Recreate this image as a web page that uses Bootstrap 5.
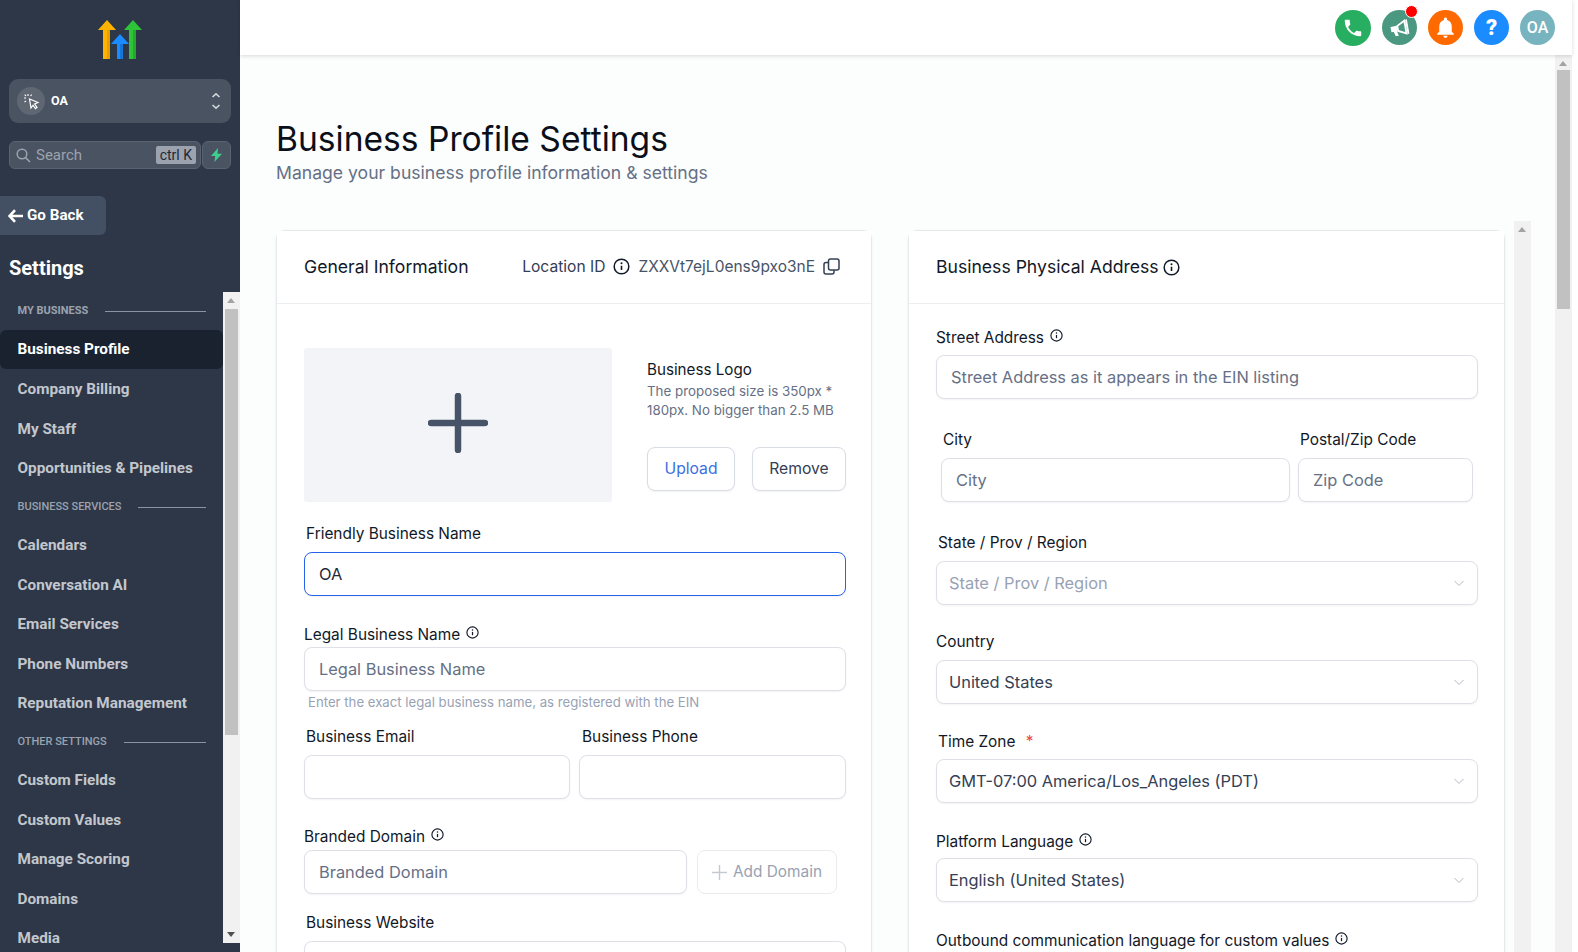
<!DOCTYPE html>
<html lang="en">
<head>
    <meta charset="UTF-8">
    <meta name="viewport" content="width=device-width, initial-scale=1.0">
    <title>Business Profile Settings</title>
    <link href="https://cdn.jsdelivr.net/npm/bootstrap@5.3.3/dist/css/bootstrap.min.css" rel="stylesheet">
    <script src="https://cdn.jsdelivr.net/npm/bootstrap@5.3.3/dist/js/bootstrap.bundle.min.js"></script>
    <style>
        html, body {
            height: 100%;
            overflow: hidden;
        }
        body {
            background: #fff;
            font-family: "Inter", "Liberation Sans", sans-serif;
            color: #111827;
        }
        /* sidebar */
        .side {
            width: 240px;
            height: 952px;
            background: #2d3748;
            font-family: "Roboto", "Liberation Sans", sans-serif;
        }
        .side-logo {
            height: 79px;
            padding-top: 20px;
            padding-left: 2px;
        }
        .switcher {
            margin: 0 9px;
            height: 44px;
            background: #4a5361;
            border-radius: 9px;
            padding: 0 10px 0 8px;
            color: #fff;
            font-size: 12.5px;
            font-weight: 700;
        }
        .switch-pic {
            width: 28px;
            height: 28px;
            border-radius: 50%;
            background: #5f6773;
            margin-right: 6px;
        }
        .search-row {
            margin: 18px 9px 0;
            height: 28px;
            gap: 1px;
        }
        .search-box {
            width: 192px;
            background: #4a5361;
            border: 1px solid #5a6372;
            border-radius: 6px;
            padding: 0 4px 0 6px;
            color: #9ca3af;
            font-size: 15px;
        }
        .search-box svg {
            margin-right: 5px;
        }
        .kbd-chip {
            margin-left: auto;
            background: #9ca3af;
            color: #1f2937;
            font-size: 14px;
            line-height: 18px;
            padding: 0 4px;
            border-radius: 2px;
        }
        .bolt-box {
            width: 29px;
            background: #4a5361;
            border: 1px solid #5a6372;
            border-radius: 6px;
        }
        .back-btn {
            margin-top: 27px;
            width: 106px;
            height: 39px;
            background: #434f63;
            border-radius: 0 6px 6px 0;
            color: #fff;
            font-size: 15.2px;
            font-weight: 700;
            padding-left: 8px;
            gap: 4px;
        }
        .side-title {
            margin: 21px 0 12px 9px;
            font-size: 20px;
            line-height: 24px;
            font-weight: 700;
            color: #fff;
        }
        .side-panel {
            height: 651px;
        }
        .side-list {
            width: 223px;
            overflow: hidden;
        }
        .side-label {
            height: 36px;
            padding: 0 17px 0 17.5px;
            color: #9ca3af;
            font-size: 11px;
            font-weight: 500;
            gap: 17px;
        }
        .side-label.first {
            height: 38px;
            font-weight: 700;
        }
        .side-label::after {
            content: "";
            flex: 1;
            height: 1px;
            background: #8b93a1;
        }
        .side-link {
            height: 38.4px;
            margin-bottom: 1.2px;
            padding: 0 0 0 17.5px;
            display: flex;
            align-items: center;
            color: #c3c7cd;
            font-size: 15.3px;
            font-weight: 700;
        }
        .side-link.active {
            height: 39.4px;
            background: #1a2230;
            border-radius: 6px;
            color: #fff;
        }
        .link-gap {
            margin-top: 1px;
        }
        .bar-track {
            width: 17px;
            background: #f1f1f1;
            position: relative;
            flex-shrink: 0;
        }
        .bar-thumb {
            position: absolute;
            left: 2px;
            right: 2px;
            background: #c1c1c1;
        }
        .bar-up, .bar-down {
            position: absolute;
            left: 4px;
            width: 0;
            height: 0;
            border-left: 4.5px solid transparent;
            border-right: 4.5px solid transparent;
        }
        .bar-up {
            top: 6px;
            border-bottom: 5px solid #a3a3a3;
        }
        .bar-down {
            bottom: 6px;
            border-top: 5px solid #505050;
        }
        /* top bar */
        .main-area {
            width: 1332px;
            height: 952px;
        }
        .top-bar {
            height: 55px;
            background: #fff;
            box-shadow: 0 1px 4px rgba(0, 0, 0, .15);
            padding-right: 17px;
            gap: 11px;
            position: relative;
            z-index: 2;
        }
        .round-btn {
            width: 35px;
            height: 35px;
            border-radius: 50%;
            color: #fff;
            position: relative;
            font-family: "Roboto", "Liberation Sans", sans-serif;
            font-weight: 700;
        }
        .round-phone {
            width: 36px;
            height: 36px;
            background: #27ae60;
        }
        .round-mega { background: #4a9880; }
        .round-bell { background: #ff6a00; }
        .round-help { background: #1a8cff; font-size: 22px; font-weight: 900; }
        .round-user { background: #78b3c0; font-size: 16px; font-weight: 500; }
        .red-dot {
            position: absolute;
            top: -5px;
            right: -1px;
            width: 13px;
            height: 13px;
            border-radius: 50%;
            background: #f00;
            border: 1px solid #fff;
        }
        .mega-tilt {
            transform: rotate(-10deg);
        }
        .page-wrap {
            height: 897px;
            background: #fcfdfd;
            overflow: hidden;
        }
        .page-content {
            width: 1315px;
            padding-left: 36px;
        }
        .page-title {
            margin: 64px 0 0;
            font-size: 33.6px;
            line-height: 40px;
            font-weight: 400;
            color: #0b0f19;
        }
        .page-sub {
            margin: 1px 0 44px;
            font-size: 17.6px;
            line-height: 26px;
            color: #667085;
        }
        .cols {
            gap: 36px;
        }
        .panel-one { width: 596px; }
        .panel-two { width: 597px; }
        .info-card {
            border: 1px solid #e6e8ec;
            border-radius: 9px;
            box-shadow: 0 1px 3px rgba(16, 24, 40, .06);
            background: #fff;
        }
        .info-head {
            height: 73px;
            padding: 0 31px 0 27px;
            border-bottom: 1px solid #eceef2;
            background: #fff;
            font-size: 17.6px;
            color: #111827;
        }
        .loc-id {
            margin-left: auto;
            font-size: 15.6px;
            color: #344054;
        }
        .loc-val {
            color: #475467;
            font-size: 15.5px;
        }
        .info-body {
            padding: 44px 25px 0 27px;
        }
        .info-body.two {
            padding: 24px 26px 0 27px;
        }
        .logo-box {
            width: 308px;
            height: 154px;
            background: #f3f4f7;
            border-radius: 3px;
        }
        .logo-plus {
            margin-bottom: 4px;
        }
        .logo-side {
            padding-left: 35px;
            font-size: 15.2px;
            line-height: 19px;
            padding-top: 12px;
        }
        .logo-hint {
            font-size: 13.35px;
            line-height: 19px;
            color: #667085;
            margin-top: 3px;
        }
        .logo-btns {
            gap: 17px;
            margin-top: 27px;
        }
        .plain-btn {
            height: 44px;
            border: 1px solid #d8dce3;
            border-radius: 8px;
            background: #fff;
            font-size: 15.7px;
            color: #344054;
            padding: 0;
            box-shadow: 0 1px 2px rgba(16, 24, 40, .05);
        }
        .btn-upload { width: 88px; color: #3b6fe0; }
        .btn-remove { width: 94px; }
        .btn-domain {
            width: 140px;
            height: 44px;
            margin-left: 10px;
            color: #98a2b3;
            border-color: #eaecf0;
            font-size: 15.4px;
            gap: 6px;
            box-shadow: none;
        }
        .fld-label {
            display: block;
            font-size: 15.4px;
            line-height: 20px;
            margin: 0 0 8px;
            color: #111827;
        }
        .fld-input.form-control, .fld-input.form-select {
            height: 44px;
            border: 1px solid #dde0e6;
            border-radius: 8px;
            padding: 0 14px;
            font-size: 16.4px;
            color: #344054;
            box-shadow: 0 1px 2px rgba(16, 24, 40, .05);
        }
        .fld-input.form-select {
            padding-left: 12px;
            background-image: url("data:image/svg+xml,%3csvg xmlns='http://www.w3.org/2000/svg' viewBox='0 0 12 12'%3e%3cpath fill='none' stroke='%23b4bac4' stroke-width='1' d='M1.5 4l4.5 4.5L10.5 4'/%3e%3c/svg%3e");
            background-size: 12px 12px;
            background-position: right 12px center;
        }
        .fld-input.is-blue {
            border-color: #2563eb;
            color: #1f2937;
        }
        .fld-input::placeholder {
            color: #667085;
            opacity: 1;
        }
        .fld-input.dim-select {
            color: #98a2b3;
        }
        .fld-hint {
            font-size: 13.2px;
            line-height: 18px;
            color: #98a2b3;
            margin: 2px 0 0 4px;
        }
        .tip-icon {
            margin-left: 6px;
            vertical-align: 1px;
        }
        .star-red {
            color: #f04438;
            margin-left: 6px;
        }
        .in-a { padding-left: 2px; }
        .in-c { padding-left: 3px; }
        .gap-tight { margin-bottom: 2px; }
    </style>
</head>
<body>
<svg width="0" height="0" class="position-absolute">
    <symbol id="tip" viewBox="0 0 16 16">
        <circle cx="8" cy="8" r="6.9" fill="none" stroke="currentColor" stroke-width="1.4"/>
        <path d="M8 7.3v4" stroke="currentColor" stroke-width="1.5" fill="none"/>
        <circle cx="8" cy="5" r=".95" fill="currentColor"/>
    </symbol>
</svg>
<div class="d-flex">
    <aside class="side flex-shrink-0">
        <div class="side-logo d-flex justify-content-center">
            <svg width="46" height="40" viewBox="0 0 46 40">
                <path d="M0 10 9 0l9 10h-6v29H5V10z" fill="#ffb300"/>
                <path d="M9 10h3v29H9z" fill="#e69f00"/>
                <path d="M26 10 35 0l9 10h-6v29h-7V10z" fill="#2dc437"/>
                <path d="M35 10h3v29h-3z" fill="#25a82e"/>
                <path d="M13 24l9-10 9 10h-6v15h-6V24z" fill="#1a8cff"/>
                <path d="M22 24h3v15h-3z" fill="#1676d8"/>
            </svg>
        </div>
        <div class="switcher d-flex align-items-center">
            <span class="switch-pic d-flex align-items-center justify-content-center">
                <svg width="17" height="17" viewBox="0 0 17 17" fill="none" stroke="#fff" stroke-width="1.2">
                    <path d="M6.5 6 15 9.5 11.6 11 14 14.3 12.4 15.6 10 12.2 8 15z"/>
                    <path d="M1 5h2M5 1v2M1.5 9 3 8M8.6 1.6 7.6 3M1.7 1.7l1.3 1.3" stroke-width="1.1"/>
                </svg>
            </span>
            <span>OA</span>
            <svg class="ms-auto" width="10" height="20" viewBox="0 0 10 20" fill="none" stroke="#d1d5db" stroke-width="1.6">
                <path d="M1.5 6 5 2.8 8.5 6M1.5 14 5 17.2 8.5 14"/>
            </svg>
        </div>
        <div class="search-row d-flex">
            <div class="search-box d-flex align-items-center">
                <svg width="15" height="15" viewBox="0 0 15 15" fill="none" stroke="#9ca3af" stroke-width="1.5">
                    <circle cx="6" cy="6" r="4.8"/>
                    <path d="M9.6 9.6 14 14"/>
                </svg>
                <span>Search</span>
                <span class="kbd-chip">ctrl K</span>
            </div>
            <div class="bolt-box d-flex align-items-center justify-content-center">
                <svg width="13" height="14" viewBox="0 0 13 14">
                    <path d="M8 0 1 8h4.3L4.4 14 12 5.7H7.5z" fill="#3ecf8e"/>
                </svg>
            </div>
        </div>
        <div class="back-btn d-flex align-items-center">
            <svg width="15" height="14" viewBox="0 0 15 14" fill="none" stroke="#fff" stroke-width="2.6">
                <path d="M7 1.2 1.6 7 7 12.8M2 7h13"/>
            </svg>
            <span>Go Back</span>
        </div>
        <div class="side-title">Settings</div>
        <div class="side-panel d-flex">
            <nav class="side-list">
                <div class="side-label first d-flex align-items-center">MY BUSINESS</div>
                <a class="side-link active text-decoration-none" href="#">Business Profile</a>
                <a class="side-link text-decoration-none" href="#">Company Billing</a>
                <a class="side-link text-decoration-none" href="#">My Staff</a>
                <a class="side-link text-decoration-none" href="#">Opportunities &amp; Pipelines</a>
                <div class="side-label d-flex align-items-center">BUSINESS SERVICES</div>
                <a class="side-link link-gap text-decoration-none" href="#">Calendars</a>
                <a class="side-link text-decoration-none" href="#">Conversation AI</a>
                <a class="side-link text-decoration-none" href="#">Email Services</a>
                <a class="side-link text-decoration-none" href="#">Phone Numbers</a>
                <a class="side-link text-decoration-none" href="#">Reputation Management</a>
                <div class="side-label d-flex align-items-center">OTHER SETTINGS</div>
                <a class="side-link link-gap text-decoration-none" href="#">Custom Fields</a>
                <a class="side-link text-decoration-none" href="#">Custom Values</a>
                <a class="side-link text-decoration-none" href="#">Manage Scoring</a>
                <a class="side-link text-decoration-none" href="#">Domains</a>
                <a class="side-link text-decoration-none" href="#">Media</a>
            </nav>
            <div class="bar-track">
                <span class="bar-up"></span>
                <span class="bar-thumb" style="top: 17px; height: 426px;"></span>
                <span class="bar-down"></span>
            </div>
        </div>
    </aside>
    <div class="main-area flex-shrink-0">
        <header class="top-bar d-flex align-items-center justify-content-end">
            <span class="round-btn round-phone d-flex align-items-center justify-content-center">
                <svg width="22" height="22" viewBox="0 0 24 24"><path fill="#fff" d="M6.62 10.79c1.44 2.83 3.76 5.14 6.59 6.59l2.2-2.2c.27-.27.67-.36 1.02-.24 1.12.37 2.33.57 3.57.57.55 0 1 .45 1 1V20c0 .55-.45 1-1 1-9.39 0-17-7.61-17-17 0-.55.45-1 1-1h3.5c.55 0 1 .45 1 1 0 1.25.2 2.45.57 3.57.11.35.03.74-.25 1.02l-2.2 2.2z"/></svg>
            </span>
            <span class="round-btn round-mega d-flex align-items-center justify-content-center">
                <svg class="mega-tilt" width="22" height="22" viewBox="0 0 24 24">
                    <path fill="#fff" d="M2 9h7v6H2zM4.5 15h3.6l1.2 5H6z"/>
                    <path fill="none" stroke="#fff" stroke-width="2" d="M9.5 9.2 18 5v14l-8.5-4.2z"/>
                    <path fill="#fff" d="M19 4h2v16h-2z"/>
                </svg>
                <span class="red-dot"></span>
            </span>
            <span class="round-btn round-bell d-flex align-items-center justify-content-center">
                <svg width="25" height="25" viewBox="0 0 24 24"><path fill="#fff" d="M12 22c1.1 0 2-.9 2-2h-4c0 1.1.89 2 2 2zm6-6v-5c0-3.07-1.64-5.64-4.5-6.32V4c0-.83-.67-1.5-1.5-1.5s-1.5.67-1.5 1.5v.68C7.63 5.36 6 7.92 6 11v5l-2 2v1h16v-1l-2-2z"/></svg>
            </span>
            <span class="round-btn round-help d-flex align-items-center justify-content-center">?</span>
            <span class="round-btn round-user d-flex align-items-center justify-content-center">OA</span>
        </header>
        <div class="page-wrap d-flex">
            <div class="page-content d-flex">
                <div>
                <h1 class="page-title">Business Profile Settings</h1>
                <p class="page-sub">Manage your business profile information &amp; settings</p>
                <div class="cols d-flex align-items-start">
                    <div class="panel-one info-card card">
                        <div class="info-head d-flex align-items-center">
                            <span>General Information</span>
                            <span class="loc-id d-flex align-items-center">
                                Location ID
                                <svg class="mx-2" width="17" height="17" color="#111827"><use href="#tip"/></svg>
                                <span class="loc-val">ZXXVt7ejL0ens9pxo3nE</span>
                                <svg class="ms-2" width="17" height="17" viewBox="0 0 17 17" fill="none" stroke="#344054" stroke-width="1.5">
                                    <rect x="5.5" y="1" width="10.5" height="11" rx="2"/>
                                    <path d="M5.5 4.5H3A2 2 0 0 0 1 6.5V14a2 2 0 0 0 2 2h6a2 2 0 0 0 2-2v-2"/>
                                </svg>
                            </span>
                        </div>
                        <div class="info-body">
                            <div class="d-flex">
                                <div class="logo-box d-flex align-items-center justify-content-center flex-shrink-0">
                                    <svg class="logo-plus" width="60" height="60" viewBox="0 0 60 60" stroke="#475467" stroke-width="6.5" stroke-linecap="round">
                                        <path d="M30 3v54M3 30h54"/>
                                    </svg>
                                </div>
                                <div class="logo-side">
                                    <div>Business Logo</div>
                                    <div class="logo-hint">The proposed size is 350px *<br>180px. No bigger than 2.5 MB</div>
                                    <div class="logo-btns d-flex">
                                        <button class="plain-btn btn-upload btn" type="button">Upload</button>
                                        <button class="plain-btn btn-remove btn" type="button">Remove</button>
                                    </div>
                                </div>
                            </div>
                            <label class="fld-label in-a" style="margin-top: 22px;">Friendly Business Name</label>
                            <input class="fld-input is-blue form-control" type="text" value="OA">
                            <label class="fld-label gap-tight" style="margin-top: 29px;">Legal Business Name<svg class="tip-icon" width="13" height="13"><use href="#tip"/></svg></label>
                            <input class="fld-input form-control" type="text" placeholder="Legal Business Name">
                            <div class="fld-hint">Enter the exact legal business name, as registered with the EIN</div>
                            <div class="d-flex" style="margin-top: 16px;">
                                <div style="width: 266px;">
                                    <label class="fld-label in-a">Business Email</label>
                                    <input class="fld-input form-control" type="text">
                                </div>
                                <div class="ms-auto" style="width: 267px;">
                                    <label class="fld-label in-c">Business Phone</label>
                                    <input class="fld-input form-control" type="text">
                                </div>
                            </div>
                            <label class="fld-label" style="margin-top: 28px; margin-bottom: 3px;">Branded Domain<svg class="tip-icon" width="13" height="13"><use href="#tip"/></svg></label>
                            <div class="d-flex">
                                <input class="fld-input form-control" style="width: 383px;" type="text" placeholder="Branded Domain">
                                <button class="plain-btn btn-domain btn d-flex align-items-center justify-content-center" type="button">
                                    <svg width="15" height="15" viewBox="0 0 15 15" stroke="#c4c9d2" stroke-width="1.4"><path d="M7.5 0v15M0 7.5h15"/></svg>
                                    Add Domain
                                </button>
                            </div>
                            <label class="fld-label in-a" style="margin-top: 19px;">Business Website</label>
                            <input class="fld-input form-control" type="text">
                        </div>
                    </div>
                    <div class="panel-two info-card card">
                        <div class="info-head d-flex align-items-center">
                            <span>Business Physical Address</span>
                            <svg class="ms-1" width="17" height="17"><use href="#tip"/></svg>
                        </div>
                        <div class="info-body two">
                            <label class="fld-label" style="margin-bottom: 7px;">Street Address<svg class="tip-icon" width="13" height="13"><use href="#tip"/></svg></label>
                            <input class="fld-input form-control" type="text" placeholder="Street Address as it appears in the EIN listing">
                            <div class="d-flex" style="margin-top: 31px; padding: 0 5px;">
                                <div style="width: 349px;">
                                    <label class="fld-label in-a">City</label>
                                    <input class="fld-input form-control" type="text" placeholder="City">
                                </div>
                                <div class="ms-auto" style="width: 175px;">
                                    <label class="fld-label in-a">Postal/Zip Code</label>
                                    <input class="fld-input form-control" type="text" placeholder="Zip Code">
                                </div>
                            </div>
                            <label class="fld-label in-a" style="margin-top: 31px;">State / Prov / Region</label>
                            <select class="fld-input dim-select form-select"><option>State / Prov / Region</option></select>
                            <label class="fld-label" style="margin-top: 27px;">Country</label>
                            <select class="fld-input form-select"><option>United States</option></select>
                            <label class="fld-label in-a" style="margin-top: 28px; margin-bottom: 7px;">Time Zone <span class="star-red">*</span></label>
                            <select class="fld-input form-select"><option>GMT-07:00 America/Los_Angeles (PDT)</option></select>
                            <label class="fld-label" style="margin-top: 29px; margin-bottom: 6px;">Platform Language<svg class="tip-icon" width="13" height="13"><use href="#tip"/></svg></label>
                            <select class="fld-input form-select"><option>English (United States)</option></select>
                            <label class="fld-label" style="margin-top: 29px;">Outbound communication language for custom values<svg class="tip-icon" width="13" height="13"><use href="#tip"/></svg></label>
                        </div>
                    </div>
                </div>
                </div>
                <div class="bar-track" style="height: 731px; margin: 166px 0 0 9px;">
                    <span class="bar-up"></span>
                </div>
            </div>
            <div class="bar-track" style="height: 897px;">
                <span class="bar-up"></span>
                <span class="bar-thumb" style="top: 15px; height: 239px;"></span>
            </div>
        </div>
    </div>
</div>
</body>
</html>
